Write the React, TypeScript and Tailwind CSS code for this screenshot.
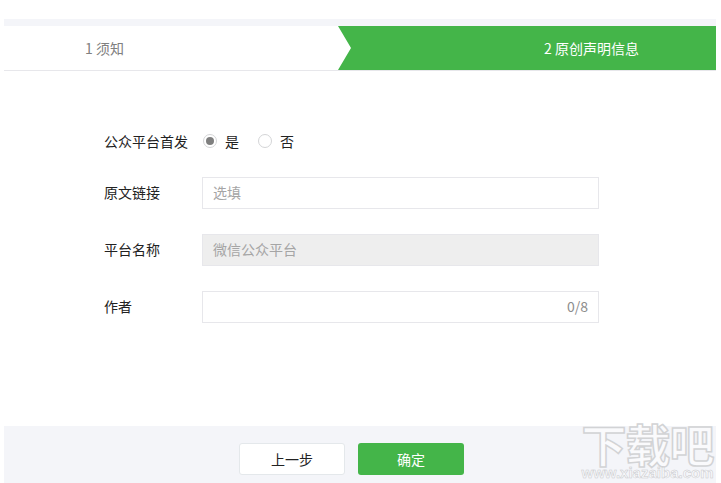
import React from 'react';

const font = { fontFamily: '"Noto Sans CJK SC", "Noto Sans", sans-serif' };

function Row({ label, children }: { label: string; children: React.ReactNode }) {
    return (
        <div className="flex items-center h-8">
            <label className="w-[98px] pb-[2px] text-sm text-[#222]">{label}</label>
            {children}
        </div>
    );
}

function Radio({ label, checked }: { label: string; checked?: boolean }) {
    return (
        <div className="flex items-center">
            <span className="w-[14px] h-[14px] rounded-full border border-[#d4d5d7] bg-white flex items-center justify-center">
                {checked && <span className="w-2 h-2 rounded-full bg-[#7f7f7f]" />}
            </span>
            <span className="ml-2 text-sm text-[#222]">{label}</span>
        </div>
    );
}

export default function App() {
    return (
        <div className="relative w-[721px] h-[483px] bg-white overflow-hidden flex flex-col pt-[19px] pl-1 pr-[5px]" style={font}>
            <div className="h-[7px] bg-[#f4f5f9]" />

            <div className="flex h-[45px] border-b border-[#e7e7eb]">
                <div className="w-[334px] flex items-center pl-[81px] text-sm text-[#808080]">1 须知</div>
                <div className="flex-1 flex items-center pl-[206px] text-sm text-white bg-[#44b549] [clip-path:polygon(0_0,100%_0,100%_100%,0_100%,13px_50%)]">
                    2 原创声明信息
                </div>
            </div>

            <div className="flex-1 flex flex-col pl-[100px] pt-[55px]">
                <div className="flex items-center h-8 pb-[2px]">
                    <label className="w-[99px] text-sm text-[#222]">公众平台首发</label>
                    <div className="flex gap-[19px]">
                        <Radio label="是" checked />
                        <Radio label="否" />
                    </div>
                </div>
                <div className="flex flex-col gap-[25px] mt-[19px]">
                    <Row label="原文链接">
                        <div className="w-[397px] h-8 border border-[#e7e7eb] flex items-center px-[10px] pb-[2px] text-sm text-[#a5a5a5]">选填</div>
                    </Row>
                    <Row label="平台名称">
                        <div className="w-[397px] h-8 border border-[#e7e7eb] bg-[#eeeeee] flex items-center px-[10px] pb-[2px] text-sm text-[#a5a5a5]">微信公众平台</div>
                    </Row>
                    <Row label="作者">
                        <div className="w-[397px] h-8 border border-[#e7e7eb] flex items-center justify-end px-[10px] pb-[2px] text-sm text-[#8d8d8d]">0/8</div>
                    </Row>
                </div>
            </div>

            <div className="h-[57px] bg-[#f4f5f9] flex gap-[13px] pl-[235px] pt-[17px]">
                <button className="w-[106px] h-8 bg-white border border-[#e4e8eb] rounded-[3px] text-sm text-[#222]">上一步</button>
                <button className="w-[106px] h-8 bg-[#44b549] rounded-[3px] text-sm text-white">确定</button>
            </div>

            {/* watermark */}
            <div className="absolute left-[581px] top-[421px] w-[133px] flex flex-col items-center pointer-events-none">
                <div className="h-[46px] text-[45px] leading-[46px] font-bold text-white/60 tracking-[-1px] whitespace-nowrap [-webkit-text-stroke:1.5px_#d2d3d5]">下载吧</div>
                <div className="h-[12px] text-[15px] leading-[12px] font-bold text-white/50 whitespace-nowrap [-webkit-text-stroke:0.5px_#c8c9cc]" style={{ fontFamily: '"Liberation Sans", sans-serif' }}>www.xiazaiba.com</div>
            </div>
        </div>
    );
}
